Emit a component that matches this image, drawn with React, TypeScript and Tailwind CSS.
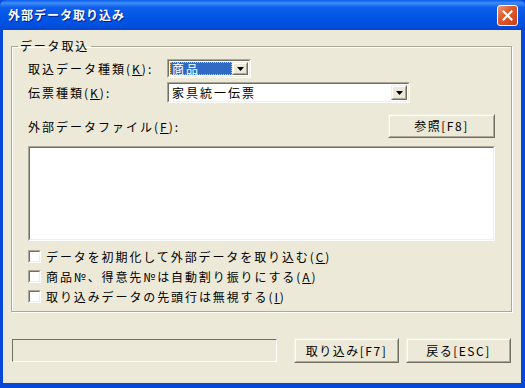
import React from "react";

const font = { fontFamily: '"Noto Sans CJK JP", "MS UI Gothic", sans-serif' };

function Sunken({ className, innerClassName, children }: { className?: string; innerClassName?: string; children?: React.ReactNode }) {
  return (
    <div className={"border border-t-[#ACA899] border-l-[#ACA899] border-r-white border-b-white " + (className || "")}>
      <div className={"h-full w-full border border-t-[#716F64] border-l-[#716F64] border-r-[#F1EFE2] border-b-[#F1EFE2] " + (innerClassName || "")}>
        {children}
      </div>
    </div>
  );
}

function Raised({ className, children }: { className?: string; children?: React.ReactNode }) {
  return (
    <div className={"border border-t-[#F1EFE2] border-l-[#F1EFE2] border-r-[#716F64] border-b-[#716F64] bg-[#ECE9D8] " + (className || "")}>
      <div className="flex h-full w-full items-center justify-center border border-t-white border-l-white border-r-[#ACA899] border-b-[#ACA899]">
        {children}
      </div>
    </div>
  );
}

function DropBtn() {
  return (
    <Raised className="h-full w-[16px] shrink-0">
      <svg width="7" height="4" viewBox="0 0 7 4">
        <path d="M0 0h7L3.5 4z" fill="#000" />
      </svg>
    </Raised>
  );
}

function Check({ label, k }: { label: string; k: string }) {
  return (
    <div className="flex h-[13px] items-center gap-[5px]">
      <Sunken className="h-[13px] w-[13px] shrink-0" innerClassName="bg-white" />
      <span className="text-[12px] leading-none tracking-[1.9px] text-black">
        {label}(<span className="underline">{k}</span>)
      </span>
    </div>
  );
}

export default function App() {
  return (
    <div style={font} className="flex h-[388px] w-[525px] flex-col bg-[#0848D8] overflow-hidden">
      {/* title bar */}
      <div className="flex h-[30px] shrink-0 items-center justify-between bg-[linear-gradient(to_bottom,#0A5CEB_0%,#3F8CF6_10%,#0D5EEC_25%,#0055E5_60%,#0050DF_85%,#0444CE_100%)] pl-[8px] pr-[7px] rounded-t-[6px]">
        <span className="text-[12px] font-bold tracking-[1px] text-white [text-shadow:1px_1px_0_#0A1E8C]">外部データ取り込み</span>
        <div className="flex h-[21px] w-[21px] items-center justify-center rounded-[3px] border border-white bg-[linear-gradient(135deg,#EC9A7E_0%,#E05A2E_40%,#C8401A_100%)]">
          <svg width="11" height="11" viewBox="0 0 11 11">
            <path d="M1.5 1.5L9.5 9.5M9.5 1.5L1.5 9.5" stroke="#fff" strokeWidth="2.2" strokeLinecap="square" />
          </svg>
        </div>
      </div>
      {/* body */}
      <div className="ml-[3px] mr-[4px] mb-[5px] flex flex-1 flex-col bg-[#ECE9D8] pl-[8px] pr-[9px] text-[12px] text-black">
        <fieldset className="mt-[9px] h-[273px] border border-[#ACA899] shadow-[inset_1px_1px_0_#fff,1px_1px_0_#fff] px-0">
          <legend className="ml-[6px] px-[2px] text-[12px] leading-[14px] tracking-[1.8px]">データ取込</legend>
          <div className="flex flex-col px-[16px] pt-[6px]">
            <div className="flex h-[19px] items-center">
              <span className="w-[139px] tracking-[2px]">取込データ種類(<span className="underline">K</span>):</span>
              <Sunken className="h-[19px] w-[84px]" innerClassName="flex items-stretch bg-white p-[1px]">
                <div className="flex flex-1 items-center border border-dotted border-[#F0C070] bg-[#316AC5] pl-[1px] tracking-[2px] text-white">商品</div>
                <DropBtn />
              </Sunken>
            </div>
            <div className="mt-[4px] flex h-[21px] items-center">
              <span className="w-[139px] tracking-[2px]">伝票種類(<span className="underline">K</span>):</span>
              <Sunken className="h-[21px] w-[243px]" innerClassName="flex items-stretch bg-white p-[1px]">
                <div className="flex flex-1 items-center pl-[2px] tracking-[2px]">家具統一伝票</div>
                <DropBtn />
              </Sunken>
            </div>
            <div className="mt-[11px] flex items-end justify-between">
              <span className="mb-[2px] tracking-[2px]">外部データファイル(<span className="underline">F</span>):</span>
              <Raised className="h-[24px] w-[107px]">
                <span className="tracking-[1.5px]">参照[F8]</span>
              </Raised>
            </div>
            <Sunken className="mt-[8px] h-[95px] w-full" innerClassName="bg-white" />
            <div className="mt-[9px] flex flex-col gap-[7px]">
              <Check label="データを初期化して外部データを取り込む" k="C" />
              <Check label="商品№、得意先№は自動割り振りにする" k="A" />
              <Check label="取り込みデータの先頭行は無視する" k="I" />
            </div>
          </div>
        </fieldset>
        <div className="mt-[26px] flex items-center">
          <div className="ml-[1px] h-[23px] w-[265px] border border-t-[#716F64] border-l-[#716F64] border-r-white border-b-white" />
          <Raised className="ml-[17px] h-[25px] w-[105px]">
            <span className="tracking-[1.5px]">取り込み[F7]</span>
          </Raised>
          <Raised className="ml-[7px] h-[25px] w-[105px]">
            <span className="tracking-[1.5px]">戻る[ESC]</span>
          </Raised>
        </div>
      </div>
    </div>
  );
}
